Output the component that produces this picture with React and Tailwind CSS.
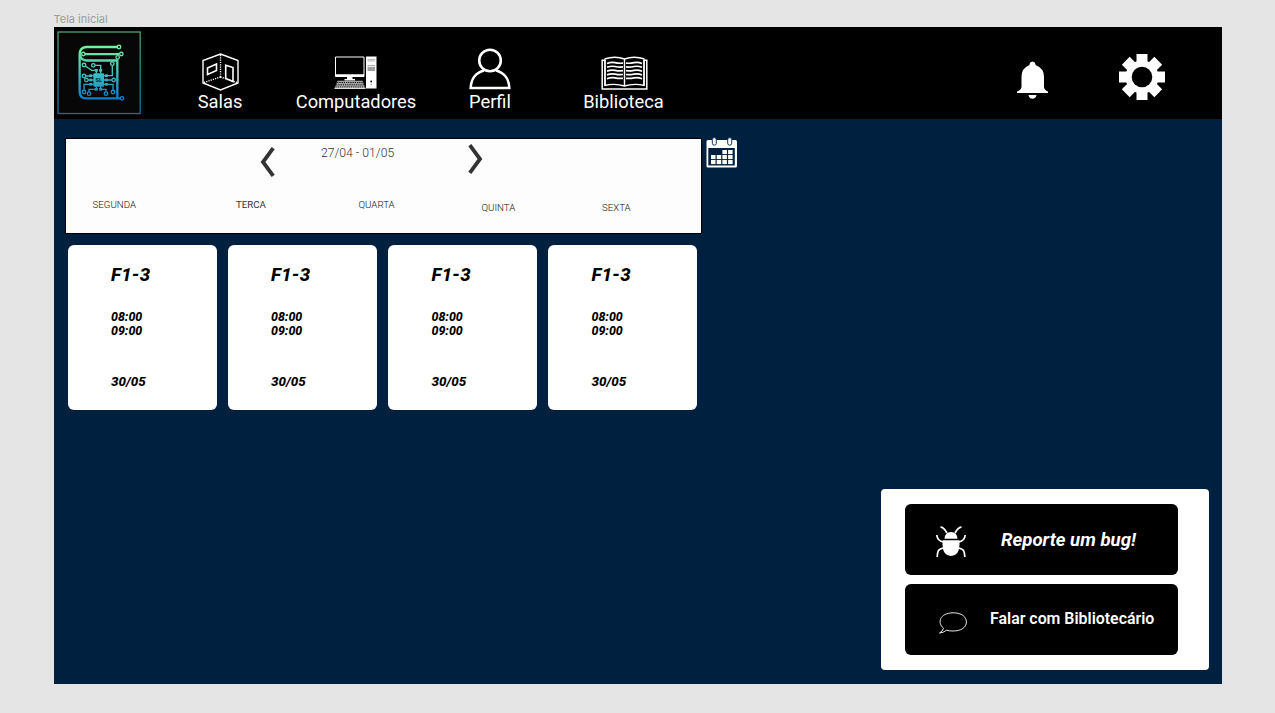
const GRADIENT = "url(#logoGradient)";

function Logo() {
  const nodes = [
    [222, 126], [229, 147], [115, 147], [218, 157], [202, 176], [117, 180], [145, 181],
    [117, 213], [124, 225], [206, 225], [117, 261], [132, 266], [183, 266], [204, 261], [231, 280],
  ];
  const pads = [
    [154, 196], [167, 196], [137, 212], [137, 225], [137, 238],
    [184, 212], [184, 225], [184, 238], [154, 253], [167, 253],
  ];
  return (
    <svg className="h-[84px] w-[88px] shrink-0" viewBox="0 0 88 84" fill="none">
      <defs>
        <linearGradient id="logoGradient" gradientUnits="userSpaceOnUse" x1="0" y1="120" x2="0" y2="285">
          <stop offset="0" stopColor="#78f59a" />
          <stop offset="0.6" stopColor="#35b4c4" />
          <stop offset="1" stopColor="#0d78c4" />
        </linearGradient>
        <linearGradient id="frameGradient" gradientUnits="userSpaceOnUse" x1="0" y1="80" x2="0" y2="326">
          <stop offset="0" stopColor="#4fa673" />
          <stop offset="0.5" stopColor="#278c8c" />
          <stop offset="1" stopColor="#146bb0" />
        </linearGradient>
      </defs>
      <g transform="translate(-12 -26) scale(0.333333)">
        <rect x="37" y="76" width="262" height="254" rx="14" fill="#070707" />
        <rect x="39" y="81" width="246.500" height="244.500" stroke="url(#frameGradient)" strokeWidth="3.800" />
        <g stroke={GRADIENT} strokeWidth="7">
          <path d="M217 126H124Q104 128 104 148V260Q104 280 124 280H226" />
          <path d="M120 147.500H224M105 149Q108 166 124 166.500H217V280" />
        </g>
        <g stroke={GRADIENT} strokeWidth="4">
          <path d="M121 183L140 196H154M150 181H167V196M202 181V212H184" />
          <path d="M122 213H137M129 225H137M184 225H201M117 256V238H137M184 238H204V256M132 261V253H154M167 253H183V261" />
          <path d="M154 196V206M167 196V206M154 244V253M167 244V253M137 212H146M137 225H146M137 238H146M176 212H184M176 225H184M176 238H184" />
          {nodes.map(([x, y]) => (
            <circle key={`${x}-${y}`} cx={x} cy={y} r="5.200" fill="#070707" />
          ))}
        </g>
        {pads.map(([x, y]) => (
          <rect key={`${x}-${y}`} x={x - 4.5} y={y - 4} width="9" height="8" fill={GRADIENT} />
        ))}
        <rect x="145" y="205" width="32" height="40" rx="3" fill={GRADIENT} />
        <text x="161" y="231" textAnchor="middle" fontFamily="Roboto, sans-serif" fontSize="17" fontWeight="800" fill="#0b2f3d">SL</text>
      </g>
    </svg>
  );
}

function RoomIcon() {
  return (
    <svg className="h-[38px] w-[37px]" viewBox="0 0 37 38" fill="none" stroke="white" strokeWidth="1.400">
      <path d="M18.500 1L36 7.500V30L18.500 37L1 30V7.500Z" />
      <path d="M18.500 2V24M18.500 24L2 29.500M18.500 24L35 29.500" strokeDasharray="1.200 1.100" />
      <path d="M5.500 15L14.500 11V17.500L5.500 21.500Z" strokeWidth="1.600" />
      <path d="M23.700 12.200L31 14.600V28.500L23.700 25.500Z" strokeWidth="1.600" />
    </svg>
  );
}

function ComputerIcon() {
  return (
    <svg className="mr-[1px] mb-[1.500px] h-[33px] w-[43px]" viewBox="0 0 43 33" fill="none">
      <path d="M1.500 1H30V20.500H1.500Z" stroke="white" strokeWidth="1" />
      <path d="M1.500 18.200H30V20.800H1.500ZM13 20.500H18.500V23H21V24.500H10.500V23H13Z" fill="white" />
      <path d="M3.500 24.800H28.500L31.500 32.500H0.500Z" fill="#a8a8a8" />
      <path d="M3.200 26.500H29M2.200 28.800H30M1.500 31H31" stroke="black" strokeWidth="1" strokeDasharray="1.200 1" />
      <path d="M0.500 32.300H31.500" stroke="white" />
      <rect x="32" y="0.500" width="10.500" height="32" fill="white" />
      <path d="M33.500 3.500H41M33.500 5H41" stroke="#999" strokeWidth="0.700" />
      <path d="M33.500 9.700H41" stroke="#999" strokeWidth="1" />
      <path d="M33.500 12H41M33.500 14H41" stroke="#444" strokeWidth="1.200" />
      <circle cx="37.200" cy="25.500" r="0.900" fill="black" />
      <circle cx="37.200" cy="28.500" r="0.600" fill="#555" />
    </svg>
  );
}

function PersonIcon() {
  return (
    <svg className="mb-[0.500px] h-[42px] w-[42px]" viewBox="0 0 42 42" fill="none" stroke="white" strokeWidth="2.600">
      <circle cx="21" cy="12.500" r="10.800" />
      <path d="M15 22.500C7 24.500 2 31 1.700 40H40.300C40 31 35 24.500 27 22.500" />
    </svg>
  );
}

function BookIcon() {
  const rows = [7.5, 11.3, 15.1, 18.9, 22.7];
  return (
    <svg className="mb-[0.500px] ml-[1px] h-[34px] w-[47px]" viewBox="0 0 47 34" fill="none" stroke="white">
      <path d="M4 4.300H1.200V33H45.800V4.300H43" strokeWidth="1.500" />
      <path d="M4 3.500V29.800M43 3.500V29.800" strokeWidth="1.800" />
      <path d="M3.500 3Q14-0.500 23.500 3Q33-0.500 43.500 3M3.500 29.500Q14 27 23.500 30Q33 27 43.500 29.500M23.500 3V30" strokeWidth="1.400" />
      {rows.map((y) => (
        <path key={y} d={`M6 ${y}Q10 ${y - 1.6} 14 ${y - 0.8}T22 ${y - 0.4}M25 ${y - 0.4}Q29 ${y} 33 ${y - 0.8}T41 ${y}`} strokeWidth="1.700" />
      ))}
    </svg>
  );
}

function BellIcon() {
  return (
    <svg className="mt-[5px] h-[38px] w-[31px]" viewBox="0 0 31 38" fill="white">
      <path d="M12.500 4V3Q13 0.500 15.500 0.500T18.500 3V4Q27 7 27 16V26Q27.500 29 31 30.500V32H0V30.500Q4 29 4.500 26V16Q4.500 7 12.500 4ZM11.500 34H19.500Q18.800 37.800 15.500 37.800T11.500 34Z" />
    </svg>
  );
}

function GearIcon() {
  const angles = [0, 45, 90, 135];
  return (
    <svg className="h-[46px] w-[46px]" viewBox="-23 -23 46 46" fill="white">
      {angles.map((a) => (
        <rect key={a} x="-5.500" y="-23" width="11" height="46" transform={`rotate(${a})`} />
      ))}
      <circle r="16.500" />
      <circle r="10.300" fill="black" />
    </svg>
  );
}

function CalendarIcon() {
  const cells = [[2, 0], [3, 0], [0, 1], [1, 1], [2, 1], [3, 1], [0, 2], [1, 2], [2, 2], [3, 2]];
  return (
    <svg className="h-[31px] w-[31px]" viewBox="0 0 31 31">
      <rect x="0.500" y="3" width="30.500" height="27.500" rx="1.500" fill="white" />
      <rect x="2.300" y="11" width="26.500" height="17.500" fill="#00203f" />
      {[8.300, 23.700].map((x) => (
        <rect key={x} x={x - 2} y="0.600" width="4" height="7.600" rx="2" fill="white" stroke="#00203f" strokeWidth="0.900" />
      ))}
      {cells.map(([c, r]) => (
        <rect key={`${c}-${r}`} x={5 + c * 5.700} y={13 + r * 5} width="4.500" height="4.100" fill="white" />
      ))}
    </svg>
  );
}

function BugIcon() {
  return (
    <svg className="h-[32px] w-[30px]" viewBox="0 0 30 32" fill="none" stroke="white" strokeWidth="1.700">
      <path d="M4.500 1.200C8 1.200 9 4 11 7M25.500 1.200C22 1.200 21 4 19 7" />
      <path d="M0.800 9C1 12 2 15.200 7.500 16M29.200 9C29 12 28 15.200 22.500 16M1.200 31C1.500 26 1.500 23 7.500 22M28.800 31C28.500 26 28.500 23 22.500 22" />
      <path d="M8.500 12.800Q9 6 15 6T21.500 12.800ZM6.500 14.200H23.500V19Q23 30 15 30T6.500 19Z" fill="white" stroke="none" />
    </svg>
  );
}

function SpeechIcon() {
  return (
    <svg className="h-[22px] w-[28px]" viewBox="0 0 28 22" fill="none" stroke="white" strokeWidth="0.900">
      <path d="M4.500 16.300C-2 11 0.500 1 14 0.800C23 0.800 27.400 5 27.400 10C27.400 15.500 22 19 14 19Q10 19 7.500 18.200Q4 21 0.500 21Q4 19 4.500 16.300Z" />
    </svg>
  );
}

function NavItem({ label, width, children }) {
  return (
    <a className={`flex h-full flex-col items-center justify-end pb-[6px] ${width}`}>
      {children}
      <span className="text-[18.300px] leading-[22px] whitespace-nowrap">{label}</span>
    </a>
  );
}

function Chevron({ flip }) {
  return (
    <svg className="h-[30px] w-[15px]" viewBox="0 0 15 30" fill="none" stroke="#333" strokeWidth="3.800">
      <path d={flip ? "M1.800 1.200L12 15L1.800 28.800" : "M13.200 1.200L3 15L13.200 28.800"} />
    </svg>
  );
}

function RoomCard({ offset }) {
  return (
    <article className={`h-[165px] w-[149px] rounded-[6px] bg-white font-extrabold text-black italic ${offset}`}>
      <h2 className="pt-[19px] text-[18.600px] leading-[22px] tracking-[0.250px]">F1-3</h2>
      <p className="mt-[24px] text-[12.400px] leading-[14px]">
        08:00
        <br />
        09:00
      </p>
      <p className="mt-[36px] text-[13.400px] leading-[16px]">30/05</p>
    </article>
  );
}

export default function App() {
  return (
    <div className="h-[713px] w-[1275px] overflow-hidden bg-[#e5e5e5] pl-[53.500px] font-[Roboto,sans-serif]">
      <div className="h-[27px] pt-[12px] font-['Inter',sans-serif] text-[11px] leading-[14px] text-[#9c9c9c]">Tela inicial</div>
      <div className="flex h-[657px] w-[1168.500px] flex-col bg-[#00203f]">
        <header className="flex h-[91.500px] shrink-0 items-center bg-black text-white">
          <div className="ml-[3.500px] self-start pt-[4px]"><Logo /></div>
          <nav className="ml-[35px] flex h-full">
            <NavItem label="Salas" width="w-[80px]"><RoomIcon /></NavItem>
            <NavItem label="Computadores" width="ml-[26px] w-[140px]"><ComputerIcon /></NavItem>
            <NavItem label="Perfil" width="ml-[24px] w-[80px]"><PersonIcon /></NavItem>
            <NavItem label="Biblioteca" width="ml-[43px] w-[101px]"><BookIcon /></NavItem>
          </nav>
          <div className="mr-[57px] ml-auto flex items-center gap-[71.500px] pt-[9px]">
            <BellIcon />
            <GearIcon />
          </div>
        </header>
        <main className="flex flex-1 flex-col">
          <div className="flex pt-[19.500px] pl-[11.500px]">
            <section className="h-[96px] w-[637px] border border-black bg-[#fdfdfd]">
              <div className="flex h-[60px] items-start pl-[193.500px]">
                <div className="pt-[7.500px]"><Chevron /></div>
                <span className="ml-[46.500px] w-[147px] pt-[7px] text-[12.200px] leading-[15px] font-light text-[#333]">27/04 - 01/05</span>
                <div className="pt-[4.500px]"><Chevron flip /></div>
              </div>
              <div className="flex pl-[26.500px] text-[9.700px] leading-[12px] font-light text-[#111]">
                <span className="w-[143.500px]">SEGUNDA</span>
                <span className="w-[122.500px] font-normal text-[#333]">TERCA</span>
                <span className="w-[123px]">QUARTA</span>
                <span className="w-[120.500px] pt-[3px]">QUINTA</span>
                <span className="pt-[3px]">SEXTA</span>
              </div>
            </section>
            <div className="ml-[4px] -mt-[1px]"><CalendarIcon /></div>
          </div>
          <div className="flex gap-[11px] pt-[10.500px] pl-[14.500px]">
            <RoomCard offset="mt-0 pl-[43px]" />
            <RoomCard offset="mt-0 pl-[43px]" />
            <RoomCard offset="mt-[0.500px] pl-[43.500px]" />
            <RoomCard offset="mt-[0.500px] pl-[43.500px]" />
          </div>
          <aside className="mt-auto mr-[13.500px] mb-[14px] flex h-[181px] w-[328px] flex-col gap-[9px] self-end rounded-[4px] bg-white pt-[14.500px] pl-[24.500px] text-white">
            <button className="flex h-[71px] w-[273px] items-center rounded-[6px] bg-black pl-[31px] text-left">
              <span className="pt-[5px]"><BugIcon /></span>
              <span className="ml-[35px] pt-[2px] text-[18.600px] leading-[22px] font-bold italic">Reporte um bug!</span>
            </button>
            <button className="flex h-[71px] w-[273px] items-center rounded-[6px] bg-black pl-[34px] text-left">
              <span className="pt-[8px]"><SpeechIcon /></span>
              <span className="ml-[23px] text-[15.900px] leading-[20px] font-semibold">Falar com Bibliotecário</span>
            </button>
          </aside>
        </main>
      </div>
    </div>
  );
}
